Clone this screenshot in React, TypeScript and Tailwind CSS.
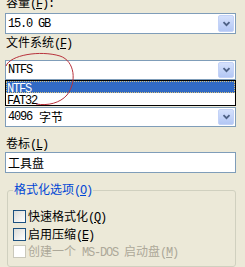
import React from "react";

const L = ({ children }: { children: React.ReactNode }) => (
  <span className="font-['Liberation_Mono',monospace] text-[12px] tracking-[-1.2px]">{children}</span>
);

const Chevron = () => (
  <svg width="9" height="6" viewBox="0 0 9 6">
    <path d="M1.5 1.2 L4.5 4.2 L7.5 1.2" fill="none" stroke="#4D6185" strokeWidth="1.8" />
  </svg>
);

const Combo = ({ h, children }: { h: string; children: React.ReactNode }) => (
  <div className={`flex ${h} items-stretch border border-[#7F9DB9] bg-white py-[1px] pr-[1px] pl-[2px]`}>
    <div className="flex flex-1 items-center">{children}</div>
    <div className="flex w-[16px] items-center justify-center rounded-[2px] border border-[#C3D2F7] bg-linear-to-b from-[#D5E1FC] to-[#B3C7F4]">
      <Chevron />
    </div>
  </div>
);

const Check = ({ disabled, children }: { disabled?: boolean; children: React.ReactNode }) => (
  <div className={`flex h-[17px] items-center ${disabled ? "text-[#ACA899]" : "text-black"}`}>
    <div
      className={`mr-[2px] h-[13px] w-[13px] border ${
        disabled ? "border-[#CAC8BB] bg-white" : "border-[#1C5180] bg-linear-to-br from-[#DCDCD7] to-white"
      }`}
    />
    <span>{children}</span>
  </div>
);

export default function App() {
  return (
    <div className="relative h-[267px] w-[245px] overflow-hidden bg-[#ECE9D8] pl-[5px] pr-[9px] font-['Noto_Sans_CJK_SC',sans-serif] text-[12px] leading-[14px] text-black">
      <div className="-mt-[5px] h-[14px] pl-[1px]">
        容量<L>(<u>F</u>):</L>
      </div>
      <div className="mt-[4px]">
        <Combo h="h-[21px]">
          <L>15.0 GB</L>
        </Combo>
      </div>
      <div className="mt-[1px] h-[14px] pl-[1px]">
        文件系统<L>(<u>F</u>)</L>
      </div>
      <div className="mt-[11px]">
        <Combo h="h-[20px]">
          <L>NTFS</L>
        </Combo>
      </div>
      <div className="border border-black bg-white">
        <div className="h-[12px] bg-[#316AC5] pl-[1px] leading-[12px] text-white outline-1 -outline-offset-1 outline-dotted outline-[#D9C27A]">
          <L>NTFS</L>
        </div>
        <div className="h-[12px] pl-[1px] leading-[12px]">
          <L>FAT32</L>
        </div>
      </div>
      <div className="mt-[1px]">
        <Combo h="h-[20px]">
          <L>4096</L>
          <span className="ml-[7px]">字节</span>
        </Combo>
      </div>
      <div className="mt-[9px] h-[14px] pl-[1px]">
        卷标<L>(<u>L</u>)</L>
      </div>
      <div className="mt-[2px] flex h-[21px] items-center border border-[#7F9DB9] bg-white pl-[2px]">
        工具盘
      </div>
      <fieldset className="mt-[9px] ml-[2px] rounded-[3px] border border-[#D0D0BF] px-[5px] pb-[6px]">
        <legend className="px-[1px] leading-[14px] text-[#0046D5]">
          格式化选项<L>(<u>O</u>)</L>
        </legend>
        <div className="mt-[10px]">
          <Check>
            快速格式化<L>(<u>Q</u>)</L>
          </Check>
        </div>
        <div className="mt-[1px]">
          <Check>
            启用压缩<L>(<u>E</u>)</L>
          </Check>
        </div>
        <Check disabled>
          创建一个<L> MS-DOS </L>启动盘<L>(<u>M</u>)</L>
        </Check>
      </fieldset>
      <svg className="pointer-events-none absolute left-0 top-0" width="245" height="267">
        <path
          d="M6 66 C10 55, 40 50, 60 56 C75 61, 77 82, 67 95 C60 103, 48 106, 36 104"
          fill="none"
          stroke="#B8323C"
          strokeWidth="1"
        />
      </svg>
    </div>
  );
}
